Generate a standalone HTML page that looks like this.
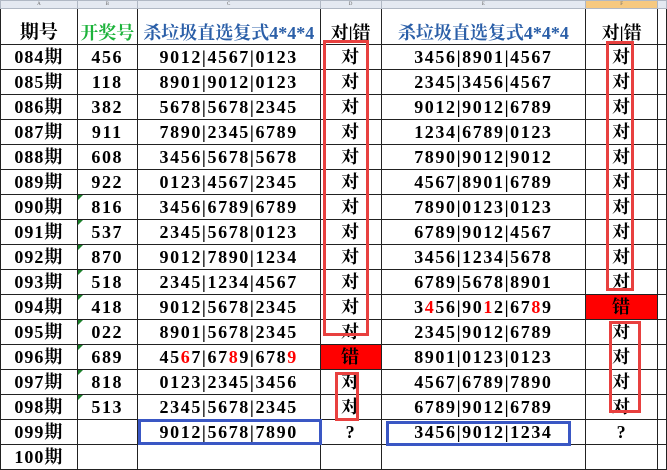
<!DOCTYPE html>
<html><head><meta charset="utf-8"><style>
body{margin:0;width:667px;height:455px;overflow:hidden;background:#fff;position:relative;font-family:"Liberation Serif","Noto Serif CJK SC",serif;}
table{border-collapse:collapse;table-layout:fixed;position:absolute;left:0;top:0;}
td{border:1px solid #222;padding:0;text-align:center;font-size:18px;font-weight:bold;height:24px;line-height:24px;white-space:nowrap;overflow:hidden;color:#000;letter-spacing:1px}
td.n{letter-spacing:1.6px}
tr.l td{height:7px;background:#e4e9f1;border:1px solid #b0b8c4;font-size:5px;line-height:7px;color:#666;font-weight:normal;letter-spacing:0}
tr.h td{height:35px;vertical-align:bottom;line-height:22px;letter-spacing:0}
.g{color:#1db33b}.b{color:#2b5fa8}.r{color:#f00}
.tri{position:relative}
.tri:before{content:"";position:absolute;left:0;top:0;border-top:5px solid #1a7f2a;border-right:5px solid transparent}
.box{position:absolute;border:3px solid #e8403f;box-sizing:border-box}
.bb{position:absolute;border:3px solid #3a57c4;box-sizing:border-box}
.fill{background:#f00}
</style></head><body>
<table>
<colgroup><col style="width:77px"><col style="width:60px"><col style="width:183px"><col style="width:61px"><col style="width:205px"><col style="width:72px"><col style="width:9px"></colgroup>
<tr class="l"><td>A</td><td>B</td><td>C</td><td>D</td><td>E</td><td style="background:#f6c980">F</td><td></td></tr>
<tr class="h"><td style="font-size:19px">期号</td><td class="g" style="font-size:18px">开奖号</td><td class="b" style="font-size:18px">杀垃圾直选复式4*4*4</td><td>对|错</td><td class="b" style="font-size:18px">杀垃圾直选复式4*4*4</td><td>对|错</td><td></td></tr>
<tr><td>084期</td><td class="n">456</td><td class="n">9012|4567|0123</td><td>对</td><td class="n">3456|8901|4567</td><td>对</td><td></td></tr>
<tr><td>085期</td><td class="n">118</td><td class="n">8901|9012|0123</td><td>对</td><td class="n">2345|3456|4567</td><td>对</td><td></td></tr>
<tr><td>086期</td><td class="n">382</td><td class="n">5678|5678|2345</td><td>对</td><td class="n">9012|9012|6789</td><td>对</td><td></td></tr>
<tr><td>087期</td><td class="n">911</td><td class="n">7890|2345|6789</td><td>对</td><td class="n">1234|6789|0123</td><td>对</td><td></td></tr>
<tr><td>088期</td><td class="n">608</td><td class="n">3456|5678|5678</td><td>对</td><td class="n">7890|9012|9012</td><td>对</td><td></td></tr>
<tr><td>089期</td><td class="n">922</td><td class="n">0123|4567|2345</td><td>对</td><td class="n">4567|8901|6789</td><td>对</td><td></td></tr>
<tr><td>090期</td><td class="tri n">816</td><td class="n">3456|6789|6789</td><td>对</td><td class="n">7890|0123|0123</td><td>对</td><td></td></tr>
<tr><td>091期</td><td class="tri n">537</td><td class="n">2345|5678|0123</td><td>对</td><td class="n">6789|9012|4567</td><td>对</td><td></td></tr>
<tr><td>092期</td><td class="tri n">870</td><td class="n">9012|7890|1234</td><td>对</td><td class="n">3456|1234|5678</td><td>对</td><td></td></tr>
<tr><td>093期</td><td class="tri n">518</td><td class="n">2345|1234|4567</td><td>对</td><td class="n">6789|5678|8901</td><td>对</td><td></td></tr>
<tr><td>094期</td><td class="tri n">418</td><td class="n">9012|5678|2345</td><td>对</td><td class="n">3<span class="r">4</span>56|90<span class="r">1</span>2|67<span class="r">8</span>9</td><td class="fill">错</td><td></td></tr>
<tr><td>095期</td><td class="tri n">022</td><td class="n">8901|5678|2345</td><td>对</td><td class="n">2345|9012|6789</td><td>对</td><td></td></tr>
<tr><td>096期</td><td class="tri n">689</td><td class="n">45<span class="r">6</span>7|67<span class="r">8</span>9|678<span class="r">9</span></td><td class="fill">错</td><td class="n">8901|0123|0123</td><td>对</td><td></td></tr>
<tr><td>097期</td><td class="tri n">818</td><td class="n">0123|2345|3456</td><td>对</td><td class="n">4567|6789|7890</td><td>对</td><td></td></tr>
<tr><td>098期</td><td class="tri n">513</td><td class="n">2345|5678|2345</td><td>对</td><td class="n">6789|9012|6789</td><td>对</td><td></td></tr>
<tr><td>099期</td><td></td><td class="n">9012|5678|7890</td><td>?</td><td class="n">3456|9012|1234</td><td>?</td><td></td></tr>
<tr><td>100期</td><td></td><td></td><td></td><td></td><td></td><td></td></tr>
</table>
<div class="box" style="left:323px;top:40px;width:46px;height:296px"></div>
<div class="box" style="left:606px;top:41px;width:28px;height:250px"></div>
<div class="box" style="left:609px;top:321px;width:32px;height:92px"></div>
<div class="box" style="left:335px;top:372px;width:24px;height:49px"></div>
<div class="bb" style="left:138px;top:419px;width:184px;height:26px"></div>
<div class="bb" style="left:386px;top:421px;width:185px;height:25px"></div>
</body></html>
